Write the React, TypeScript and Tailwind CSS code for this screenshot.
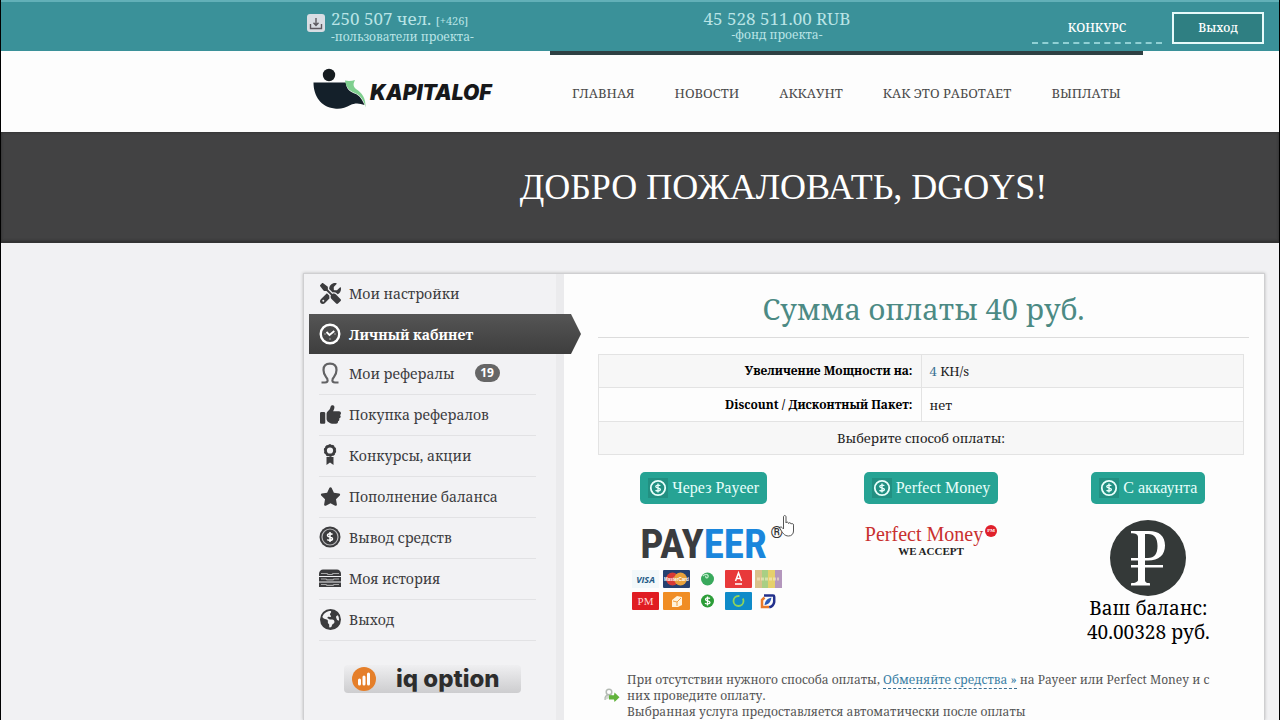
import type { ReactNode } from "react";
import { FaScrewdriverWrench, FaThumbsUp, FaStar, FaEarthAmericas } from "react-icons/fa6";

const serif = "font-['Noto_Serif','Droid_Serif','DejaVu_Serif_Condensed','DejaVu_Serif',serif]";
const times = "font-['Liberation_Serif',serif]";

function DownloadIcon() {
  return (
    <svg className="size-5" viewBox="0 0 20 20" aria-hidden="true">
      <rect x="1" y="1" width="18" height="18" rx="3" fill="#d8dde3" />
      <path d="M10 5v7M7.5 9.8l2.5 2.7 2.5-2.7M4.5 11v4.5h11V11" fill="none" stroke="#5d5a60" strokeWidth="1.4" />
    </svg>
  );
}

function LogoMark() {
  return (
    <svg className="h-[42px] w-14" viewBox="0 0 56 42" aria-hidden="true">
      <circle cx="17" cy="7" r="6.2" fill="#161c20" />
      <path d="M1.500 14.500H34C34 21 38 24 44 26c4 2 7 7 8.500 11-5-2-10-2-14 0-5 3-11 4.500-16 3.500C9 39 1.500 28 1.500 14.500Z" fill="#14202a" />
      <path d="M33 12.500c4 .8 7 .3 10-.5-2 4-2 6 1 9 6 4 10 9 9.500 18.500C52 32 48 27 43 25c-6-2-9-6-10-12.500Z" fill="#7fcf8f" />
    </svg>
  );
}

function CoinIcon({ className }: { className: string }) {
  return (
    <svg className={className} viewBox="0 0 20 20" aria-hidden="true">
      <circle cx="10" cy="10" r="8" fill="none" stroke="currentColor" strokeWidth="2" />
      <path d="M12.600 7.400C11.800 6.500 7.500 6.300 7.500 8.400c0 2.100 5.200 1.200 5.200 3.300 0 2.200-4.600 1.900-5.400.8M10 5v10" fill="none" stroke="currentColor" strokeWidth="1.500" />
    </svg>
  );
}

function ClockIcon() {
  return (
    <svg className="size-[22px]" viewBox="0 0 22 22" fill="none" stroke="#fff" aria-hidden="true">
      <circle cx="11" cy="11" r="9.300" strokeWidth="2.400" />
      <path d="m7.500 9 3 3 4.800-4" strokeWidth="1.800" />
      <path d="M5.500 11h1M15.500 11h1M11 15.500v1" strokeWidth="1" />
    </svg>
  );
}

function PersonIcon() {
  return (
    <svg className="size-[22px]" viewBox="0 0 22 22" fill="none" stroke="#626264" strokeWidth="2.200" aria-hidden="true">
      <path d="M2.500 20.500H6c2 0 3-1 2.500-3C8 15 4.500 14 4.500 8 4.500 4 7 1.600 11 1.600S17.500 4 17.500 8c0 6-3.500 7-4 9.500-.5 2 .5 3 2.500 3h3.500" />
    </svg>
  );
}

function AwardIcon() {
  return (
    <svg className="size-[22px]" viewBox="0 0 22 22" aria-hidden="true">
      <circle cx="11" cy="6.500" r="4.500" fill="none" stroke="currentColor" strokeWidth="2.800" />
      <circle cx="11" cy="6.500" r="5.600" fill="none" stroke="currentColor" strokeWidth="1.200" strokeDasharray="2 1.500" />
      <path d="M7.500 13h7v8L11 18.500 7.500 21Z" fill="currentColor" />
    </svg>
  );
}

function MoneyIcon() {
  return (
    <svg className="size-[22px]" viewBox="0 0 22 22" aria-hidden="true">
      <circle cx="11" cy="11" r="10.500" fill="currentColor" />
      <circle cx="11" cy="11" r="8" fill="none" stroke="#b9b9bb" strokeWidth="1.200" />
      <path d="M13.500 8.500C12.700 7.500 8.500 7.300 8.500 9.400c0 2.100 5 1.200 5 3.300 0 2.200-4.400 1.900-5.200.8M11 6v10" fill="none" stroke="#fff" strokeWidth="1.500" />
    </svg>
  );
}

function DrawerIcon() {
  return (
    <svg className="size-[22px]" viewBox="0 0 22 22" aria-hidden="true">
      <path d="M4 2.500h14c2 0 4 2 4 4V9H0V6.500c0-2 2-4 4-4Z" fill="currentColor" />
      <path d="M0 10h22v4.500H0ZM0 15.500h22V20H0Z" fill="currentColor" />
      <path d="M2 6.500h6l1 1h4l1-1h6M2 12h5l1 .8h6l1-.8h5M2 17.500h5l1 .8h6l1-.8h5" fill="none" stroke="#a9a9a9" strokeWidth="1.200" />
    </svg>
  );
}

const menu: { label: string; icon: ReactNode; active?: boolean; badge?: string }[] = [
  { label: "Мои настройки", icon: <FaScrewdriverWrench className="size-[21px]" /> },
  { label: "Личный кабинет", icon: <ClockIcon />, active: true },
  { label: "Мои рефералы", icon: <PersonIcon />, badge: "19" },
  { label: "Покупка рефералов", icon: <FaThumbsUp className="size-[21px]" /> },
  { label: "Конкурсы, акции", icon: <AwardIcon /> },
  { label: "Пополнение баланса", icon: <FaStar className="size-[21px]" /> },
  { label: "Вывод средств", icon: <MoneyIcon /> },
  { label: "Моя история", icon: <DrawerIcon /> },
  { label: "Выход", icon: <FaEarthAmericas className="size-[21px]" /> },
];

const navItems = ["ГЛАВНАЯ", "НОВОСТИ", "АККАУНТ", "КАК ЭТО РАБОТАЕТ", "ВЫПЛАТЫ"];

function Header() {
  return (
    <header>
      <div className="flex h-[51px] items-start border-t-2 border-[#62b0b8] bg-[#3a9199] pr-[15px] pl-[305px] text-[#b9e4e6]">
        <div className="flex flex-1 items-start gap-[5px] pt-2">
          <div className="pt-[3px]">
            <DownloadIcon />
          </div>
          <div>
            <p className="text-[17px] leading-[18px]">
              250 507 чел. <span className="text-[11px]">[+426]</span>
            </p>
            <p className="text-[12px] leading-[13px]">-пользователи проекта-</p>
          </div>
        </div>
        <div className="flex-1 pt-2 pr-4 text-center">
          <p className="text-[17px] leading-[18px]">45 528 511.00 RUB</p>
          <p className="text-[12px] leading-[13px]">-фонд проекта-</p>
        </div>
        <div className="flex flex-1 items-start justify-end gap-[10px] pt-[10px] text-[12px] text-white">
          <a href="#contest" className="flex h-8 w-[130px] items-center justify-center border-b-2 border-dashed border-[#8fd0d4] pt-[2px] font-medium">
            КОНКУРС
          </a>
          <button type="button" className="h-8 w-[92px] border-2 border-[#e6fafa] bg-[#2f7f82] font-medium">
            Выход
          </button>
        </div>
      </div>
      <div className="flex h-[81px] items-start bg-[#fdfdfd] pl-[311px]">
        <a href="#home" className="flex w-[238px] items-center gap-[2px] pt-[17px] text-[#17181a]">
          <LogoMark />
          <span className="pt-2 font-['Inter',sans-serif] text-[21px] leading-6 font-black italic">KAPITALOF</span>
        </a>
        <nav className="flex gap-10 border-t-4 border-[#2f4043] px-[22px] pt-7 text-[13px] leading-5 text-[#4b4b4b]">
          {navItems.map((item) => (
            <a key={item} href="#nav" className="whitespace-nowrap">
              {item}
            </a>
          ))}
        </nav>
      </div>
    </header>
  );
}

function Sidebar() {
  return (
    <aside className="w-[260px] shrink-0 border-r-8 border-[#ebebed] bg-[#f2f2f4] text-[#3c3c3e]">
      <nav>
        {menu.map((item, index) =>
          item.active ? (
            <a
              key={item.label}
              href="#menu"
              className="relative ml-[5px] flex h-10 w-[272px] items-center gap-2 bg-linear-to-b from-[#555] to-[#3e3e3e] pl-[10px] text-[14px] font-bold text-white [clip-path:polygon(0_0,262px_0,100%_50%,262px_100%,0_100%)]"
            >
              {item.icon}
              {item.label}
            </a>
          ) : (
            <a
              key={item.label}
              href="#menu"
              className={`mr-5 ml-[15px] flex items-center gap-2 pb-[2px] text-[14px] ${index === 0 ? "h-10" : "h-[41px] border-b border-[#e2e2e4]"}`}
            >
              <span className="flex w-[22px] justify-center">{item.icon}</span>
              {item.label}
              {item.badge && (
                <span className="ml-3 flex h-[18px] w-[25px] items-center justify-center rounded-full bg-[#666] font-['Noto_Sans',sans-serif] text-[12px] font-bold text-white">
                  {item.badge}
                </span>
              )}
            </a>
          ),
        )}
      </nav>
      <a
        href="#iq"
        className="mt-6 ml-10 flex h-7 w-[177px] items-center gap-5 rounded-sm bg-linear-to-b from-[#efeff1] to-[#cdcdcf] pl-2 font-['Inter',sans-serif] text-[24px] leading-6 font-extrabold text-[#2d2d2d]"
      >
        <svg className="size-6 shrink-0" viewBox="0 0 24 24" aria-hidden="true">
          <circle cx="12" cy="12" r="12" fill="#e57f2a" />
          <path d="M7.500 17v-4M12 17v-7M16.500 17V7" stroke="#fff" strokeWidth="3" strokeLinecap="round" />
        </svg>
        <span className="whitespace-nowrap">iq option</span>
      </a>
    </aside>
  );
}

function PayButton({ children }: { children: ReactNode }) {
  return (
    <button type="button" className={`flex h-8 items-center gap-1 rounded-[5px] bg-[#26a394] px-2 text-[16px] leading-5 whitespace-nowrap text-[#e8fffb] ${times}`}>
      <span className="flex size-5 items-center justify-center bg-[#229082]">
        <CoinIcon className="size-[18px]" />
      </span>
      {children}
    </button>
  );
}

function PaymentChips() {
  return (
    <svg className="h-[41px] w-[150px]" viewBox="0 0 150 41" role="img" aria-label="VISA, MasterCard, PM">
      <rect width="27" height="18" fill="#f2f8fa" />
      <text x="13.500" y="13" textAnchor="middle" fontSize="9" fontWeight="700" fontStyle="italic" fill="#1f5a86" fontFamily="Open Sans, sans-serif">VISA</text>
      <rect x="31" width="27" height="18" rx="1" fill="#26406f" />
      <circle cx="40.500" cy="9" r="6.500" fill="#d83a35" />
      <circle cx="48.500" cy="9" r="6.500" fill="#e9a23c" />
      <text x="44.500" y="11" textAnchor="middle" fontSize="4.500" fontWeight="700" fill="#fff" fontFamily="Liberation Sans, sans-serif">MasterCard</text>
      <circle cx="75.500" cy="9" r="6.500" fill="#39a95c" />
      <path d="M71 6c3-3 6-1 5 1s-3 0-2-1" fill="none" stroke="#bdebc8" strokeWidth="1.300" />
      <rect x="93" width="27" height="18" rx="1" fill="#e8393a" />
      <path d="m103.500 11 3-8 3 8M104.500 8.500h4M103 14h7" fill="none" stroke="#fff" strokeWidth="1.500" />
      <rect x="123" width="7" height="18" fill="#d9c18b" />
      <rect x="130" width="6" height="18" fill="#a9cf84" />
      <rect x="136" width="7" height="18" fill="#e5d06c" />
      <rect x="143" width="7" height="18" fill="#b497bd" />
      <path d="M125 9h22" stroke="#f6edc8" strokeWidth="3" strokeDasharray="3 1" opacity=".6" />
      <rect y="22" width="27" height="18" rx="1" fill="#e01c22" />
      <text x="13.500" y="35" textAnchor="middle" fontSize="11" fill="#ffd6d6" fontFamily="Liberation Serif, serif">PM</text>
      <rect x="31" y="22" width="27" height="18" rx="1" fill="#f08d24" />
      <path d="m40 30 5-4 5 1v8l-4 2h-6Z" fill="#fff3dc" />
      <path d="m41 31 4 1v4M45 32l4-4" fill="none" stroke="#f0a044" />
      <circle cx="75.500" cy="31" r="6.500" fill="#2c9d38" />
      <path d="M78 28.500c-1-1-4.500-1-4.500.9s4.500 1.200 4.500 3.100-4 1.800-5 .6M75.500 26.500v9" fill="none" stroke="#fff" strokeWidth="1.300" />
      <rect x="93" y="22" width="27" height="18" rx="1" fill="#0f8bc9" />
      <circle cx="106.500" cy="31" r="5" fill="none" stroke="#8fd35c" strokeWidth="1.800" strokeDasharray="24 4" />
      <path d="M132 25.500h9c.8 0 1.200.5 1.200 1.200V32c-.4 3-2 4.500-5 5.300" fill="none" stroke="#23318c" strokeWidth="2.500" />
      <path d="M132.500 27.500l-2.500 2.500v7h7" fill="none" stroke="#e8792b" strokeWidth="2.500" />
      <path d="M132.500 35c1-5 3-6.500 7-7.500-1 5-3 7-7 7.500Z" fill="#2a5bb8" />
    </svg>
  );
}

function PointerHand() {
  return (
    <svg className="absolute top-[42px] left-[139px] h-6 w-4" viewBox="0 0 16 24" aria-hidden="true">
      <path d="M4.500 15V3c0-2 2.500-2 2.500 0v6c.5-1.500 2.500-1 2.500.5.500-1.300 2.500-1 2.500.6.600-1 2.500-.8 2.500 1V17c0 3-2 5-5 5-4 0-6-3-8.500-7.500-.6-1.500 1.200-2 2-1Z" fill="#fff" stroke="#555" />
    </svg>
  );
}

function Methods() {
  return (
    <div className="mt-[17px] grid grid-cols-[211fr_243fr_191fr] items-start text-black">
      <div className="flex flex-col items-center">
        <PayButton>Через Payeer</PayButton>
        <div className="relative -mt-8 pt-12 pl-2">
          <div className="flex h-[50px] items-center pl-2 font-['Roboto_Condensed','Liberation_Sans_Narrow','Roboto',sans-serif] text-[41px] font-bold">
            <span className="text-[#3a3c3f]">PAY</span>
            <span className="text-[#1a86dc]">EER</span>
            <span className="ml-1 self-start pt-[3px] text-[16px] leading-5 text-[#333]">®</span>
          </div>
          <PaymentChips />
          <div className="absolute top-0 left-4">
            <PointerHand />
          </div>
        </div>
      </div>
      <div className="flex flex-col items-center">
        <PayButton>Perfect Money</PayButton>
        <div className={`mt-[18px] flex items-start gap-[2px] text-[20px] leading-6 text-[#c9302f] ${times}`}>
          <span>Perfect Money</span>
          <span className="mt-[3px] flex size-3 items-center justify-center rounded-full bg-[#e0202b] text-[5px] font-bold text-white">PM</span>
        </div>
        <p className={`text-[11px] leading-[10px] font-bold text-[#222] ${times}`}>WE ACCEPT</p>
      </div>
      <div className="flex flex-col items-center">
        <PayButton>С аккаунта</PayButton>
        <svg className="mt-4 size-[76px]" viewBox="0 0 76 76" role="img" aria-label="Рубль">
          <circle cx="38" cy="38" r="38" fill="#343938" />
          <path
            d="M21 11h18c10 0 16 5 16 14.500S49 40.500 38 40.500h-3V45h18v2.500H35V60c0 2 1 3 5 3.200V65.500H21v-2.300c4-.2 7-1.200 7-3.200V47.500h-7V45h7v-4.500h-7V38h7V17c0-2.500-2-3.700-7-3.800ZM35 14v24h3c6.500 0 9.500-4 9.500-12S44.500 14 38 14Z"
            fill="#fff"
            fillRule="evenodd"
          />
        </svg>
        <p className="text-center text-[19px] leading-6">
          Ваш баланс:
          <br />
          40.00328 руб.
        </p>
      </div>
    </div>
  );
}

function Content() {
  return (
    <main className="min-w-0 flex-1 bg-[#fdfdfd] pr-[15px] pl-[34px]">
      <h2 className="border-b border-[#dcdcdc] pt-4 pb-[9px] text-center text-[29px] leading-[38px] text-[#4c8a84]">Сумма оплаты 40 руб.</h2>
      <div className="pr-[5px]">
        <table className="mt-4 w-full border-collapse text-[13px] leading-4 text-[#222]">
          <tbody>
            <tr className="h-[33px] bg-[#f7f7f7]">
              <th scope="row" className="w-1/2 border border-[#e3e3e3] px-2 text-right text-[12px] font-bold text-black">Увеличение Мощности на:</th>
              <td className="border border-[#e3e3e3] px-2">
                <span className="text-[#3b7193]">4</span> KH/s
              </td>
            </tr>
            <tr className="h-[34px]">
              <th scope="row" className="border border-[#e3e3e3] px-2 text-right text-[12px] font-bold text-black">Discount / Дисконтный Пакет:</th>
              <td className="border border-[#e3e3e3] px-2">нет</td>
            </tr>
            <tr className="h-[33px] bg-[#f7f7f7]">
              <td colSpan={2} className="border border-[#e3e3e3] text-center">Выберите способ оплаты:</td>
            </tr>
          </tbody>
        </table>
        <Methods />
        <div className="mt-7 flex items-center gap-[7px] pr-5 pl-[6px] text-[12px] leading-4 text-[#555]">
          <svg className="size-4 shrink-0" viewBox="0 0 16 16" aria-hidden="true">
            <circle cx="5" cy="4" r="2.800" fill="none" stroke="#b4bab4" strokeWidth="1.500" />
            <path d="M1 12c-.5-4 1.500-5 4-5s3 1 3 2" fill="#d5dad3" stroke="#b4bab4" strokeWidth="1.200" />
            <path d="m10.500 4.500 5 4.800-5 4.700-.5-2.500H5V7.200h5Z" fill="#62b33c" />
          </svg>
          <p>
            При отсутствии нужного способа оплаты,{" "}
            <a href="#exchange" className="border-b border-dashed border-[#3b7193] text-[#3b7fa5]">Обменяйте средства »</a> на Payeer или Perfect Money и с них проведите оплату.
            <br />
            Выбранная услуга предоставляется автоматически после оплаты
          </p>
        </div>
      </div>
    </main>
  );
}

export default function App() {
  return (
    <div className={`flex min-h-screen flex-col border-x border-black bg-[#f1f1f3] ${serif}`}>
      <Header />
      <div className="flex h-[111px] items-center border-b-2 border-[#333] bg-[#424243] pr-[15px] pl-[302px] shadow-[inset_0_0_3px_#2c2c2c]">
        <h1 className={`flex-1 text-center text-[36px] text-white ${times}`}>ДОБРО ПОЖАЛОВАТЬ, DGOYS!</h1>
      </div>
      <div className="flex flex-1 flex-col pt-[30px] pr-[14px] pl-[302px]">
        <div className="flex flex-1 border border-b-0 border-[#cfcfd1] shadow-[0_0_3px_#bbb]">
          <Sidebar />
          <Content />
        </div>
      </div>
    </div>
  );
}
